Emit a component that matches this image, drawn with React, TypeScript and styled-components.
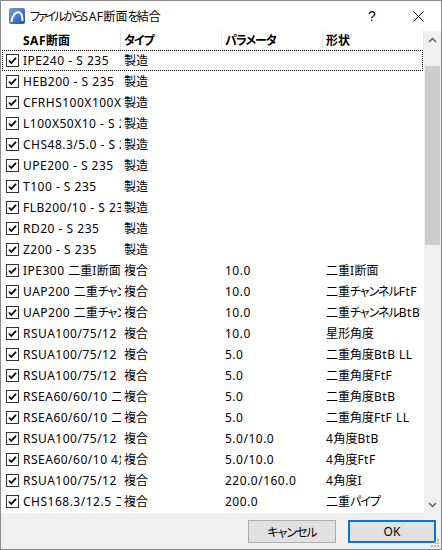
import React from 'react';
import styled, {createGlobalStyle} from 'styled-components';

const GlobalStyle = createGlobalStyle`
  html, body {
    margin: 0;
    padding: 0;
    background: #fff;
  }
  * {
    box-sizing: border-box;
  }
`;

const FONT = `"Noto Sans", "Noto Sans CJK JP", sans-serif`;

const Window = styled.div`
  position: relative;
  width: 442px;
  height: 550px;
  border: 1px solid #8a8a8a;
  background: #fff;
  display: flex;
  flex-direction: column;
  font-family: ${FONT};
  font-size: 12px;
  font-feature-settings: "palt";
  color: #000;
  overflow: hidden;
`;

// kana in Yu Gothic UI run narrower than Noto CJK, latin a bit wider
const Kana = styled.span<{$tight?: boolean}>`
  letter-spacing: ${p => (p.$tight ? '-2px' : '-1px')};
`;

const Latin = styled.span`
  letter-spacing: 0.5px;
`;

const Txt: React.FC<{s: string; tight?: boolean}> = ({s, tight}) => (
  <>
    {s.split(/([\u3040-\u30ff]+|[\u4e00-\u9fff]+)/).filter(Boolean).map((part, i) => {
      if (/^[\u3040-\u30ff]+$/.test(part)) return <Kana key={i} $tight={tight}>{part}</Kana>;
      if (/^[\u4e00-\u9fff]+$/.test(part)) return <span key={i}>{part}</span>;
      return <Latin key={i}>{part}</Latin>;
    })}
  </>
);

const TitleBar = styled.div`
  height: 30px;
  flex: none;
  display: flex;
  align-items: center;
`;

const TitleIcon = styled.svg`
  width: 16px;
  height: 16px;
  margin-left: 8px;
  flex: none;
`;

const TitleText = styled.div`
  margin-left: 5px;
  flex: 1;
  font-size: 12px;
`;

const CaptionButton = styled.div`
  width: 46px;
  height: 30px;
  display: flex;
  align-items: center;
  justify-content: center;
  font-size: 14px;
  font-family: "Liberation Sans", sans-serif;
`;

const ListView = styled.div`
  flex: 1;
  display: flex;
  min-height: 0;
`;

const ListBody = styled.div`
  flex: 1;
  display: flex;
  flex-direction: column;
`;

const HeaderRow = styled.div`
  display: grid;
  grid-template-columns: 120px 101px 101px 101px;
  height: 19px;
  flex: none;
`;

const HeaderCell = styled.div<{$first?: boolean}>`
  padding-left: ${p => (p.$first ? '22px' : '3px')};
  border-right: 1px solid #e5e5e5;
  font-weight: 700;
  line-height: 19px;
  white-space: nowrap;
  overflow: hidden;
`;

const Row = styled.div<{$focus?: boolean}>`
  display: grid;
  grid-template-columns: 118px 101px 101px 99px;
  height: 21px;
  flex: none;
  margin: 0 1px;
  border: 1px dotted ${p => (p.$focus ? '#000' : 'transparent')};
`;

const Cell = styled.div`
  padding-left: 3px;
  line-height: 19px;
  white-space: nowrap;
  overflow: hidden;
`;

const NameCell = styled.div`
  display: flex;
  align-items: center;
  white-space: nowrap;
  overflow: hidden;
  line-height: 19px;
`;

const NameText = styled.span`
  white-space: pre;
`;

const Check = styled.svg`
  width: 13px;
  height: 13px;
  flex: none;
  margin-left: 3px;
  margin-right: 4px;
`;

const ScrollBar = styled.div`
  width: 17px;
  flex: none;
  background: #f0f0f0;
  display: flex;
  flex-direction: column;
  align-items: center;
`;

const ScrollArrow = styled.div`
  height: 17px;
  width: 17px;
  flex: none;
  display: flex;
  align-items: center;
  justify-content: center;
`;

const Thumb = styled.div<{$top: number; $height: number}>`
  width: 15px;
  margin-top: ${p => p.$top}px;
  height: ${p => p.$height}px;
  background: #cdcdcd;
`;

const Spacer = styled.div`
  flex: 1;
`;

const Footer = styled.div`
  height: 36px;
  flex: none;
  background: #f0f0f0;
  display: flex;
  justify-content: flex-end;
  align-items: flex-start;
  gap: 12px;
  padding: 7px 5px 0 0;
`;

const Button = styled.button<{$default?: boolean}>`
  width: 88px;
  height: 23px;
  background: #e1e1e1;
  border: ${p => (p.$default ? '2px solid #0078d7' : '1px solid #adadad')};
  font-family: ${FONT};
  font-feature-settings: "palt";
  font-size: 12px;
  color: #000;
  padding: 0;
  display: flex;
  align-items: center;
  justify-content: center;
`;

const Grip = styled.svg`
  position: absolute;
  right: 1px;
  bottom: 1px;
  width: 12px;
  height: 12px;
`;

type Item = [string, string, string, string];

const items: Item[] = [
  ['IPE240 - S 235', '製造', '', ''],
  ['HEB200 - S 235', '製造', '', ''],
  ['CFRHS100X100X10 - S 235', '製造', '', ''],
  ['L100X50X10 - S 235', '製造', '', ''],
  ['CHS48.3/5.0 - S 235', '製造', '', ''],
  ['UPE200 - S 235', '製造', '', ''],
  ['T100 - S 235', '製造', '', ''],
  ['FLB200/10 - S 235', '製造', '', ''],
  ['RD20 - S 235', '製造', '', ''],
  ['Z200 - S 235', '製造', '', ''],
  ['IPE300 二重I断面', '複合', '10.0', '二重I断面'],
  ['UAP200 二重チャンネルFtF', '複合', '10.0', '二重チャンネルFtF'],
  ['UAP200 二重チャンネルBtB', '複合', '10.0', '二重チャンネルBtB'],
  ['RSUA100/75/12 - 星形角度', '複合', '10.0', '星形角度'],
  ['RSUA100/75/12 - 二重角度BtB LL', '複合', '5.0', '二重角度BtB LL'],
  ['RSUA100/75/12 - 二重角度FtF', '複合', '5.0', '二重角度FtF'],
  ['RSEA60/60/10 二重角度BtB', '複合', '5.0', '二重角度BtB'],
  ['RSEA60/60/10 二重角度FtF LL', '複合', '5.0', '二重角度FtF LL'],
  ['RSUA100/75/12 - 4角度BtB', '複合', '5.0/10.0', '4角度BtB'],
  ['RSEA60/60/10 4角度FtF', '複合', '5.0/10.0', '4角度FtF'],
  ['RSUA100/75/12 - 4角度I', '複合', '220.0/160.0', '4角度I'],
  ['CHS168.3/12.5 二重パイプ', '複合', '200.0', '二重パイプ'],
];

const CheckBox = () => (
  <Check viewBox="0 0 13 13">
    <rect x="0.5" y="0.5" width="12" height="12" fill="#fff" stroke="#333"/>
    <path d="M3 6.5 L5.3 9 L10 3.8" fill="none" stroke="#000" strokeWidth="1.8"/>
  </Check>
);

const App: React.FC = () => {
  return (
    <>
      <GlobalStyle/>
      <Window>
        <TitleBar>
          <TitleIcon viewBox="0 0 16 16">
            <defs>
              <linearGradient id="ig" x1="0" y1="0" x2="1" y2="1">
                <stop offset="0" stopColor="#6f9fe0"/>
                <stop offset="1" stopColor="#1d57b5"/>
              </linearGradient>
            </defs>
            <rect x="0" y="0" width="16" height="16" rx="2" fill="url(#ig)"/>
            <path d="M2.5 14 C3 7 7 3.5 10.5 4.5 C13 5.5 13.5 9 13.5 13" fill="none" stroke="#fff" strokeWidth="2"/>
          </TitleIcon>
          <TitleText><Txt s="ファイルからSAF断面を結合" tight/></TitleText>
          <CaptionButton>?</CaptionButton>
          <CaptionButton>
            <svg width="11" height="11" viewBox="0 0 11 11">
              <path d="M0.5 0.5 L10.5 10.5 M10.5 0.5 L0.5 10.5" stroke="#000" strokeWidth="1"/>
            </svg>
          </CaptionButton>
        </TitleBar>
        <ListView>
          <ListBody>
            <HeaderRow>
              <HeaderCell $first><Txt s="SAF断面"/></HeaderCell>
              <HeaderCell><Txt s="タイプ"/></HeaderCell>
              <HeaderCell><Txt s="パラメータ"/></HeaderCell>
              <HeaderCell><Txt s="形状"/></HeaderCell>
            </HeaderRow>
            {items.map((it, i) => (
              <Row key={i} $focus={i === 0}>
                <NameCell>
                  <CheckBox/>
                  <NameText><Txt s={it[0]}/></NameText>
                </NameCell>
                <Cell><Txt s={it[1]}/></Cell>
                <Cell><Txt s={it[2]}/></Cell>
                <Cell><Txt s={it[3]}/></Cell>
              </Row>
            ))}
          </ListBody>
          <ScrollBar>
            <ScrollArrow>
              <svg width="9" height="6" viewBox="0 0 9 6">
                <path d="M1 5 L4.5 1.5 L8 5" fill="none" stroke="#606060" strokeWidth="1.5"/>
              </svg>
            </ScrollArrow>
            <Thumb $top={18} $height={179}/>
            <Spacer/>
            <ScrollArrow>
              <svg width="9" height="6" viewBox="0 0 9 6">
                <path d="M1 1 L4.5 4.5 L8 1" fill="none" stroke="#606060" strokeWidth="1.5"/>
              </svg>
            </ScrollArrow>
          </ScrollBar>
        </ListView>
        <Footer>
          <Button><Txt s="キャンセル"/></Button>
          <Button $default>OK</Button>
        </Footer>
        <Grip viewBox="0 0 12 12">
          {[[9, 3], [6, 6], [9, 6], [3, 9], [6, 9], [9, 9]].map(([x, y], i) => (
            <rect key={i} x={x} y={y} width="2" height="2" fill="#b8b8b8"/>
          ))}
        </Grip>
      </Window>
    </>
  );
};

export default App;
